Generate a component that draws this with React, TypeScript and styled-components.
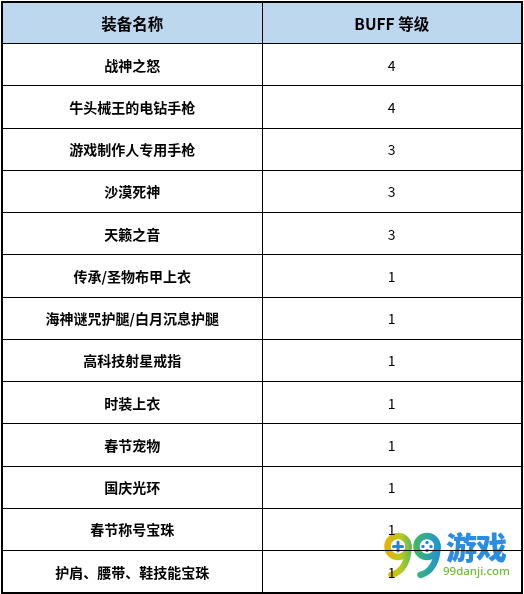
import styled, { createGlobalStyle } from 'styled-components'

const GlobalStyle = createGlobalStyle`
  html, body {
    margin: 0;
    padding: 0;
    background: #fff;
  }
  body {
    font-family: "Noto Sans CJK SC", "Noto Sans", sans-serif;
    color: #000;
  }
`

const rows = [
  { name: '战神之怒', level: 4 },
  { name: '牛头械王的电钻手枪', level: 4 },
  { name: '游戏制作人专用手枪', level: 3 },
  { name: '沙漠死神', level: 3 },
  { name: '天籁之音', level: 3 },
  { name: '传承/圣物布甲上衣', level: 1 },
  { name: '海神谜咒护腿/白月沉息护腿', level: 1 },
  { name: '高科技射星戒指', level: 1 },
  { name: '时装上衣', level: 1 },
  { name: '春节宠物', level: 1 },
  { name: '国庆光环', level: 1 },
  { name: '春节称号宝珠', level: 1 },
  { name: '护肩、腰带、鞋技能宝珠', level: 1 },
]

const Page = styled.div`
  position: relative;
  width: 524px;
  height: 594px;
  padding: 1px 0 0 1px;
  box-sizing: border-box;
  overflow: hidden;
`

const Table = styled.table`
  width: 522px;
  border-collapse: collapse;
  border: 2px solid #000;
  table-layout: fixed;
`

const HeadCell = styled.th`
  height: 40px;
  padding: 0;
  background: #bdd7ee;
  border: 1px solid #000;
  font-size: 15.5px;
  font-weight: 700;
  text-align: center;
  vertical-align: middle;
`

const Cell = styled.td<{ $bold?: boolean }>`
  height: 41.25px;
  padding: 0;
  border: 1px solid #000;
  font-size: 14px;
  font-weight: ${(p) => (p.$bold ? 700 : 400)};
  text-align: center;
  vertical-align: middle;
`

const Watermark = styled.div`
  position: absolute;
  left: 382px;
  top: 528px;
  display: flex;
  align-items: flex-start;
  mix-blend-mode: multiply;
  pointer-events: none;
`

const Brand = styled.div`
  display: flex;
  flex-direction: column;
  align-items: flex-start;
  padding-top: 1px;
`

const BrandName = styled.div`
  font-size: 31px;
  font-weight: 900;
  line-height: 34px;
  color: #2a8ce2;
  letter-spacing: -1px;
  margin-left: 3px;
`

const BrandUrl = styled.div`
  font-family: "Noto Sans", "Open Sans", sans-serif;
  font-size: 11.5px;
  font-weight: 500;
  line-height: 13px;
  color: #6fbd32;
  margin-top: 1px;
`

function NinetyNine() {
  return (
    <svg width="61" height="52" viewBox="0 0 61 52">
      <defs>
        <linearGradient id="nn" x1="0" y1="0" x2="61" y2="0" gradientUnits="userSpaceOnUse">
          <stop offset="0" stopColor="#f7a600" />
          <stop offset="0.3" stopColor="#b8cc1e" />
          <stop offset="0.55" stopColor="#3db86a" />
          <stop offset="1" stopColor="#1b8de6" />
        </linearGradient>
      </defs>
      <g fill="none" stroke="url(#nn)" strokeWidth="6.5" strokeLinecap="round">
        <circle cx="16" cy="18.5" r="10.5" />
        <path d="M26.5 18 C26.5 33 20.5 44 9.5 47" />
        <circle cx="45" cy="18.5" r="10.5" />
        <path d="M55.5 18 C55.5 33 49.5 44 38.5 47" />
      </g>
      <g stroke="#1e88e5" strokeWidth="3" strokeLinecap="round">
        <line x1="11.5" y1="18.5" x2="20.5" y2="18.5" />
        <line x1="16" y1="14" x2="16" y2="23" />
      </g>
      <g fill="#1e88e5">
        <circle cx="45" cy="14.5" r="1.7" />
        <circle cx="41" cy="18.5" r="1.7" />
        <circle cx="49" cy="18.5" r="1.7" />
        <circle cx="45" cy="22.5" r="1.7" />
      </g>
    </svg>
  )
}

export default function App() {
  return (
    <>
      <GlobalStyle />
      <Page>
        <Table>
          <thead>
            <tr>
              <HeadCell>装备名称</HeadCell>
              <HeadCell>BUFF 等级</HeadCell>
            </tr>
          </thead>
          <tbody>
            {rows.map((r) => (
              <tr key={r.name}>
                <Cell $bold>{r.name}</Cell>
                <Cell>{r.level}</Cell>
              </tr>
            ))}
          </tbody>
        </Table>
        <Watermark>
          <NinetyNine />
          <Brand>
            <BrandName>游戏</BrandName>
            <BrandUrl>99danji.com</BrandUrl>
          </Brand>
        </Watermark>
      </Page>
    </>
  )
}
